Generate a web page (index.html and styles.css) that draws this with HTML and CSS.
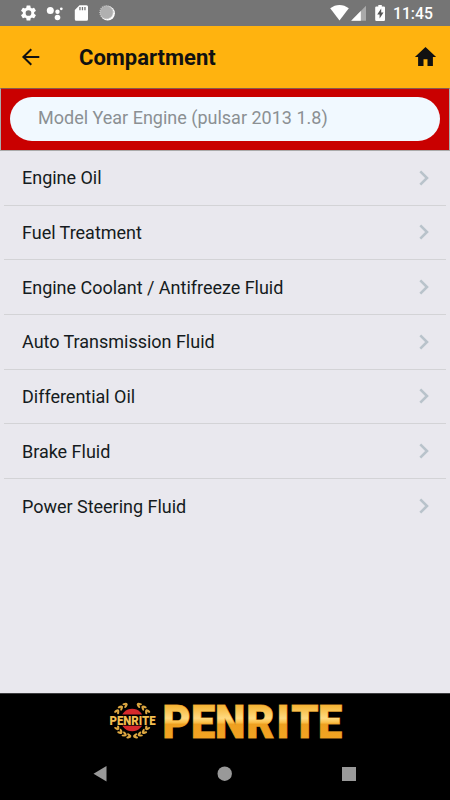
FILE: index.html
```
<!DOCTYPE html>
<html lang="en">
<head>
<meta charset="UTF-8">
<meta name="viewport" content="width=device-width, initial-scale=1">
<title>Compartment</title>
<link rel="stylesheet" href="styles.css">
</head>
<body>

<div class="status-bar">
  <svg class="status-icons" width="130" height="26" viewBox="0 0 130 26">
    <g fill="#fff" transform="translate(19 3.5) scale(.79)">
      <path d="M19.14 12.94c.04-.3.06-.61.06-.94s-.02-.64-.07-.94l2.03-1.58a.49.49 0 0 0 .12-.61l-1.92-3.32a.49.49 0 0 0-.59-.22l-2.39.96a7 7 0 0 0-1.62-.94l-.36-2.54a.48.48 0 0 0-.48-.41h-3.84a.47.47 0 0 0-.47.41l-.36 2.54c-.59.24-1.13.57-1.62.94l-2.39-.96a.48.48 0 0 0-.59.22L2.74 8.87a.47.47 0 0 0 .12.61l2.03 1.58a6 6 0 0 0-.02 1.88l-2.03 1.58a.49.49 0 0 0-.12.61l1.92 3.32c.12.22.37.29.59.22l2.39-.96c.5.38 1.03.7 1.62.94l.36 2.54c.05.24.24.41.48.41h3.84c.24 0 .44-.17.47-.41l.36-2.54a7 7 0 0 0 1.62-.94l2.39.96c.22.08.47 0 .59-.22l1.92-3.32a.47.47 0 0 0-.12-.61zM12 15.6A3.6 3.6 0 1 1 12 8.4a3.6 3.6 0 0 1 0 7.2z"/>
    </g>
    <g fill="#fff">
      <circle cx="50.3" cy="10.5" r="3.5"/>
      <circle cx="57.5" cy="11.8" r="2.200"/>
      <circle cx="61.3" cy="8.8" r="1.400"/>
      <circle cx="57.5" cy="17.5" r="2.8"/>
      <path fill-rule="evenodd" d="M79.5 5.3h7a1.5 1.5 0 0 1 1.5 1.5v12.5a1.5 1.5 0 0 1-1.5 1.5H76.3a1.5 1.5 0 0 1-1.5-1.5V10zM79.3 7v3.2h1.3V7zm2.5 0v3.2h1.3V7zm2.5 0v3.2h1.3V7z"/>
      <circle cx="107.7" cy="13.3" r="7.2"/>
    </g>
    <circle cx="106.5" cy="12.3" r="6.6" fill="#b0b0b0" stroke="#ccc" stroke-width="1.200" stroke-dasharray="1 1"/>
  </svg>
  <div class="status-right">
    <svg width="60" height="26" viewBox="0 0 60 26">
      <path fill="#fff" d="M.2 8.3C5.8 3.8 13.2 3.8 18.8 8.3L9.5 20.5z"/>
      <path fill="#a9a9a9" d="M36 5.8V20.7H21.2z"/>
      <path fill="#fff" d="M30.8 11V20.7H21.2z"/>
      <path fill="#fff" d="M48.3 5h3.5v1.4h2a1.2 1.2 0 0 1 1.2 1.2v12.1a1.2 1.2 0 0 1-1.2 1.2h-7.4a1.2 1.2 0 0 1-1.2-1.2V7.6a1.2 1.2 0 0 1 1.2-1.2h1.9z"/>
      <path fill="#555" d="M51.2 8.6l-4 6h2.4v4l3.9-6h-2.3z"/>
    </svg>
    <span class="clock">11:45</span>
  </div>
</div>

<header class="toolbar">
  <svg class="back" width="24" height="24" viewBox="0 0 24 24">
    <path fill="none" stroke="#111" stroke-width="2" d="M21.300 12H5M13.300 4.200L5.400 12l7.900 7.800"/>
  </svg>
  <h1>Compartment</h1>
  <svg class="home" width="24" height="24" viewBox="0 0 24 24">
    <path fill="#111" d="M9.500 21v-6.800h4V21h5.400v-9h3.200L11.500 2 .9 12h3.200v9z"/>
  </svg>
</header>

<div class="search">
  <div class="search-field">Model Year Engine (pulsar 2013 1.8)</div>
</div>

<ul class="list">
  <li><span>Engine Oil</span><svg width="10" height="16" viewBox="0 0 10 16"><path d="M1.300 1.300L8 8l-6.700 6.700"/></svg></li>
  <li><span>Fuel Treatment</span><svg width="10" height="16" viewBox="0 0 10 16"><path d="M1.300 1.300L8 8l-6.700 6.700"/></svg></li>
  <li><span>Engine Coolant / Antifreeze Fluid</span><svg width="10" height="16" viewBox="0 0 10 16"><path d="M1.300 1.300L8 8l-6.700 6.700"/></svg></li>
  <li><span>Auto Transmission Fluid</span><svg width="10" height="16" viewBox="0 0 10 16"><path d="M1.300 1.300L8 8l-6.700 6.700"/></svg></li>
  <li><span>Differential Oil</span><svg width="10" height="16" viewBox="0 0 10 16"><path d="M1.300 1.300L8 8l-6.700 6.700"/></svg></li>
  <li><span>Brake Fluid</span><svg width="10" height="16" viewBox="0 0 10 16"><path d="M1.300 1.300L8 8l-6.700 6.700"/></svg></li>
  <li><span>Power Steering Fluid</span><svg width="10" height="16" viewBox="0 0 10 16"><path d="M1.300 1.300L8 8l-6.700 6.700"/></svg></li>
</ul>

<footer class="brand">
  <svg width="260" height="54" viewBox="0 0 260 54">
    <defs>
      <linearGradient id="gold" gradientUnits="userSpaceOnUse" x1="0" y1="11" x2="0" y2="45">
        <stop offset="0" stop-color="#f4b02c"/>
        <stop offset=".42" stop-color="#ffda80"/>
        <stop offset=".54" stop-color="#fbc04a"/>
        <stop offset=".6" stop-color="#eea020"/>
        <stop offset="1" stop-color="#f2a322"/>
      </linearGradient>
      <g id="leaf">
        <ellipse cx="0" cy="-1.200" rx="2.500" ry="1.100" transform="rotate(25)"/>
        <ellipse cx="0" cy="1.200" rx="2.500" ry="1.100" transform="rotate(-25)"/>
      </g>
      <g id="laurel">
        <use href="#leaf" transform="translate(20 12.200) rotate(-30)"/>
        <use href="#leaf" transform="translate(15.500 15) rotate(-45)"/>
        <use href="#leaf" transform="translate(12 19) rotate(-60)"/>
        <use href="#leaf" transform="translate(12 34.500) rotate(55)"/>
        <use href="#leaf" transform="translate(15 38.500) rotate(42)"/>
        <use href="#leaf" transform="translate(19 41.300) rotate(25)"/>
        <use href="#leaf" transform="translate(23.500 43) rotate(12)"/>
      </g>
    </defs>
    <!-- badge with laurel wreath -->
    <circle cx="27.200" cy="27" r="11.300" fill="#d62a2c"/>
    <g fill="#dda741">
      <use href="#laurel"/>
      <use href="#laurel" transform="translate(54.400 0) scale(-1 1)"/>
    </g>
    <rect x="4" y="21.500" width="47" height="11.200" fill="#000"/>
    <text class="badge-text" x="4.500" y="31.800" textLength="46" lengthAdjust="spacingAndGlyphs">PENRITE</text>
    <text class="brand-text" transform="scale(.92 1)" x="62.500 93.500 119.500 153.500 186.500 202.500 231.500" y="45">PENRITE</text>
  </svg>
</footer>

<nav class="nav-bar">
  <svg width="450" height="53" viewBox="0 0 450 53">
    <g fill="#999">
      <path d="M93.500 26.700l13-7.700v15.400z"/>
      <circle cx="224.700" cy="26.700" r="7.200"/>
      <rect x="342" y="20" width="14" height="14"/>
    </g>
  </svg>
</nav>

</body>
</html>
```
FILE: styles.css
```
* {
  box-sizing: border-box;
}

body {
  margin: 0;
  height: 800px;
  display: flex;
  flex-direction: column;
  overflow: hidden;
  background-color: #e9e8ee;
  color: #151b20;
  font-family: Roboto, sans-serif;
}

svg {
  display: block;
  flex: none;
}

.status-bar {
  height: 26px;
  flex: none;
  display: flex;
  justify-content: space-between;
  background-color: #757575;
}

.status-right {
  display: flex;
  padding-right: 17px;
}

.clock {
  width: 43px;
  padding-left: 3px;
  color: #fff;
  font-size: 15.7px;
  line-height: 28px;
  font-weight: 500;
  white-space: nowrap;
}

.toolbar {
  height: 62px;
  flex: none;
  display: flex;
  align-items: center;
  padding: 0 12px 0 18px;
  background-color: #ffb30f;
}

.toolbar h1 {
  flex: 1;
  margin: 2px 0 0 37px;
  color: #111;
  font-size: 22px;
  line-height: 26px;
  font-weight: 700;
}

.search {
  height: 63px;
  flex: none;
  padding: 8px 9px;
  background-color: #c90000;
  border: 1px solid #aaa;
  border-top-color: #8a5a50;
}

.search-field {
  height: 44px;
  padding-left: 28px;
  border-radius: 22px;
  background-color: #f1f9ff;
  color: #8b9093;
  font-size: 18px;
  line-height: 42px;
}

.list {
  flex: 1;
  margin: 0;
  padding: 0 4px;
  list-style: none;
}

.list li {
  height: 54.65px;
  display: flex;
  align-items: center;
  justify-content: space-between;
  padding: 0 17px 0 18px;
  border-bottom: 1px solid #d3d3d6;
  font-size: 18px;
}

.list li:last-child {
  border-bottom: none;
}

.list span {
  letter-spacing: -.02px;
}

.list path {
  fill: none;
  stroke: #b9c3cb;
  stroke-width: 2.6;
}

.brand {
  height: 54px;
  flex: none;
  padding-left: 105px;
  background-color: #000;
  border-top: 1px solid #3c3c3e;
}

.brand svg {
  margin-top: -1px;
  overflow: visible;
}

.brand-text {
  fill: url(#gold);
  stroke: #c98a24;
  stroke-width: 1;
  paint-order: stroke;
  font-size: 47px;
  font-weight: 900;
}

.badge-text {
  fill: #f2bd50;
  font-size: 13.5px;
  font-weight: 900;
}

.nav-bar {
  height: 53px;
  flex: none;
  background-color: #000;
}
```
